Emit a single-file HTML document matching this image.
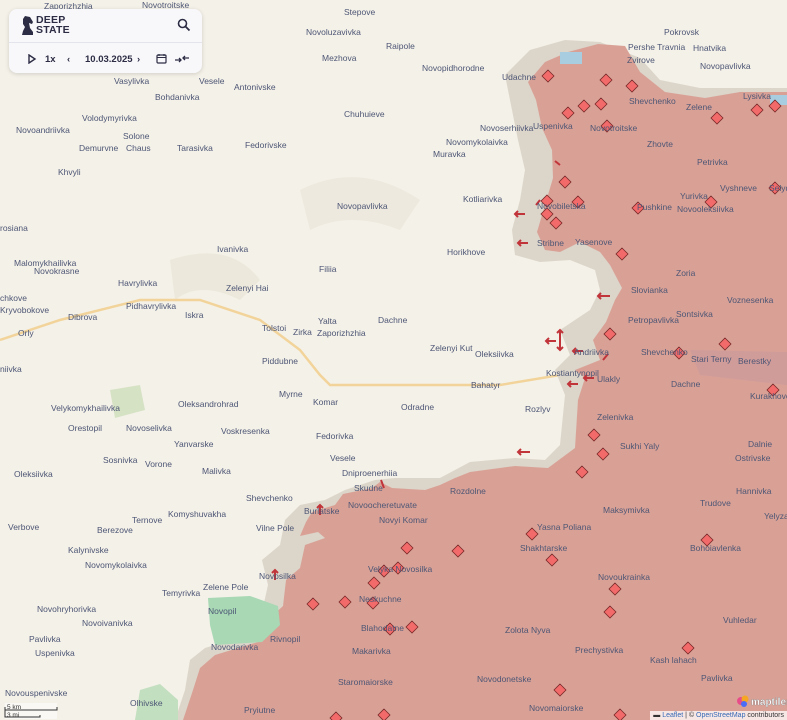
<!DOCTYPE html>
<html><head><meta charset="utf-8"><style>
html,body{margin:0;padding:0;width:787px;height:720px;overflow:hidden;background:#f4f1e8;font-family:"Liberation Sans",sans-serif}
svg{position:absolute;left:0;top:0}
.l{font-size:8.5px;fill:#4d5675}
.panel{position:absolute;left:9px;top:9px;width:193px;height:64px;background:#f8f8fb;border-radius:8px;box-shadow:0 1px 4px rgba(0,0,0,.15)}
.panel .top{height:33px;border-bottom:1px solid #e4e5ec;position:relative}
.logo{position:absolute;left:27px;top:6px;font-weight:bold;font-size:10.5px;line-height:10px;color:#2c2c44;letter-spacing:.2px}
.ctl{position:absolute;top:45px;font-size:9.5px;font-weight:bold;color:#2c2c44}
.attr{position:absolute;right:0;bottom:0;background:rgba(255,255,255,.75);font-size:7px;padding:1px 3px;color:#333}
.attr a{color:#3568b5;text-decoration:none}
</style></head><body>
<svg width="787" height="720" viewBox="0 0 787 720">
<path d="M300 190 Q360 160 420 200 L400 230 Q350 210 310 230 Z" fill="#e9e4d8" opacity=".6"/>
<path d="M170 260 Q230 240 260 280 L240 300 Q200 280 175 300Z" fill="#e6e2d4" opacity=".6"/>
<path d="M0 340 L60 320 L140 300 L200 300 L260 320 L300 350 L320 375 L330 385 L500 385 L560 375 L620 378 L700 382 L787 385" stroke="#f2d49a" stroke-width="2.5" fill="none"/>
<path d="M505 75 L530 50 L565 40 L600 42 L640 58 L660 80 L700 88 L787 88 L787 720 L175 720 L185 690 L190 660 L205 648 L248 635 L262 612 L268 585 L262 560 L280 545 L285 520 L300 505 L325 500 L345 490 L375 480 L395 478 L440 478 L470 462 L515 458 L545 460 L560 445 L565 395 L555 370 L570 355 L560 330 L590 310 L600 290 L595 270 L570 260 L540 262 L515 255 L512 230 L520 200 L525 170 L518 140 L512 110 Z" fill="#dcd5ca"/>
<path d="M528 82 L545 62 L568 52 L598 44 L625 46 L640 72 L665 92 L705 98 L740 92 L787 92 L787 720 L183 720 L193 690 L200 668 L215 655 L258 642 L270 618 L283 606 L286 580 L300 568 L305 545 L325 538 L318 532 L300 536 L306 522 L312 512 L335 505 L343 494 L372 488 L380 482 L392 488 L425 490 L440 485 L455 478 L470 472 L515 466 L548 468 L575 448 L578 400 L585 378 L575 370 L600 360 L593 340 L606 322 L615 300 L622 288 L610 265 L600 252 L580 242 L560 252 L545 250 L537 232 L545 205 L553 178 L552 150 L542 128 L536 100 Z" fill="#d9a196"/>
<path d="M690 350 L787 352 L787 385 L700 375 Z" fill="#c9999c" opacity=".6"/>
<rect x="560" y="52" width="22" height="12" fill="#a8cce0"/>
<rect x="770" y="95" width="17" height="10" fill="#a8cce0"/>
<path d="M208 598 L250 596 L278 606 L280 625 L262 642 L215 645 L210 625 Z" fill="#a8d8b4"/>
<path d="M110 390 L140 385 L145 410 L115 418Z" fill="#d6e2c4"/>
<path d="M140 690 L160 684 L178 700 L178 720 L135 720Z" fill="#c2dfbf"/>
<g fill="#f26a6a" stroke="#7a2a2a" stroke-width=".8">
<path d="M548 70l6 6-6 6-6-6z M606 74l6 6-6 6-6-6z M632 80l6 6-6 6-6-6z M568 107l6 6-6 6-6-6z M584 100l6 6-6 6-6-6z M601 98l6 6-6 6-6-6z M607 120l6 6-6 6-6-6z M717 112l6 6-6 6-6-6z M757 104l6 6-6 6-6-6z M775 100l6 6-6 6-6-6z M565 176l6 6-6 6-6-6z M547 195l6 6-6 6-6-6z M578 196l6 6-6 6-6-6z M547 208l6 6-6 6-6-6z M556 217l6 6-6 6-6-6z M622 248l6 6-6 6-6-6z M638 202l6 6-6 6-6-6z M711 196l6 6-6 6-6-6z M775 182l6 6-6 6-6-6z M610 328l6 6-6 6-6-6z M679 347l6 6-6 6-6-6z M725 338l6 6-6 6-6-6z M773 384l6 6-6 6-6-6z M594 429l6 6-6 6-6-6z M603 448l6 6-6 6-6-6z M582 466l6 6-6 6-6-6z M532 528l6 6-6 6-6-6z M458 545l6 6-6 6-6-6z M407 542l6 6-6 6-6-6z M384 565l6 6-6 6-6-6z M398 562l6 6-6 6-6-6z M374 577l6 6-6 6-6-6z M373 597l6 6-6 6-6-6z M345 596l6 6-6 6-6-6z M313 598l6 6-6 6-6-6z M390 623l6 6-6 6-6-6z M412 621l6 6-6 6-6-6z M552 554l6 6-6 6-6-6z M615 583l6 6-6 6-6-6z M610 606l6 6-6 6-6-6z M707 534l6 6-6 6-6-6z M688 642l6 6-6 6-6-6z M560 684l6 6-6 6-6-6z M620 709l6 6-6 6-6-6z M384 709l6 6-6 6-6-6z M336 712l6 6-6 6-6-6z"/>
</g>
<g stroke="#c0343a" stroke-width="2" fill="none">
<path d="M525 214h-10m3-3l-3 3 3 3 M528 243h-10m3-3l-3 3 3 3 M610 296h-12m3-3l-3 3 3 3 M560 330v20 M557 333l3-3 3 3 M557 347l3 3 3-3 M556 341h-10m3-3l-3 3 3 3 M583 351h-10m3-3l-3 3 3 3 M608 354l-5 6 M594 378h-10m3-3l-3 3 3 3 M578 384h-10m3-3l-3 3 3 3 M530 452h-12m3-3l-3 3 3 3 M384 488l-3-8 M320 515v-10m-3 3l3-3 3 3 M275 580v-10m-3 3l3-3 3 3 M560 165l-5-4 M540 200l-4 5"/>
</g>
<g class="l">
<text x="44" y="9">Zaporizhzhia</text><text x="142" y="8">Novotroitske</text><text x="344" y="15">Stepove</text>
<text x="306" y="35">Novoluzavivka</text><text x="386" y="49">Raipole</text><text x="322" y="61">Mezhova</text>
<text x="422" y="71">Novopidhorodne</text><text x="502" y="80">Udachne</text><text x="664" y="35">Pokrovsk</text>
<text x="628" y="50">Pershe Travnia</text><text x="693" y="51">Hnatvika</text><text x="627" y="63">Zvirove</text>
<text x="700" y="69">Novopavlivka</text><text x="114" y="84">Vasylivka</text><text x="199" y="84">Vesele</text>
<text x="234" y="90">Antonivske</text><text x="155" y="100">Bohdanivka</text><text x="743" y="99">Lysivka</text>
<text x="629" y="104">Shevchenko</text><text x="686" y="110">Zelene</text><text x="82" y="121">Volodymyrivka</text>
<text x="344" y="117">Chuhuieve</text><text x="16" y="133">Novoandriivka</text><text x="123" y="139">Solone</text>
<text x="480" y="131">Novoserhiivka</text><text x="533" y="129">Uspenivka</text><text x="590" y="131">Novotroitske</text>
<text x="79" y="151">Demurvne</text><text x="126" y="151">Chaus</text><text x="177" y="151">Tarasivka</text>
<text x="245" y="148">Fedorivske</text><text x="446" y="145">Novomykolaivka</text><text x="647" y="147">Zhovte</text>
<text x="433" y="157">Muravka</text><text x="697" y="165">Petrivka</text><text x="58" y="175">Khvyli</text>
<text x="720" y="191">Vyshneve</text><text x="769" y="191">Selyd</text><text x="680" y="199">Yurivka</text>
<text x="463" y="202">Kotliarivka</text><text x="537" y="209">Novobiletska</text><text x="637" y="210">Pushkine</text>
<text x="677" y="212">Novooleksiivka</text><text x="337" y="209">Novopavlivka</text><text x="0" y="231">rosiana</text>
<text x="217" y="252">Ivanivka</text><text x="537" y="246">Stribne</text><text x="575" y="245">Yasenove</text>
<text x="447" y="255">Horikhove</text><text x="14" y="266">Malomykhailivka</text><text x="319" y="272">Filiia</text>
<text x="676" y="276">Zoria</text><text x="34" y="274">Novokrasne</text><text x="226" y="291">Zelenyi Hai</text>
<text x="118" y="286">Havrylivka</text><text x="631" y="293">Slovianka</text><text x="727" y="303">Voznesenka</text>
<text x="0" y="301">chkove</text><text x="0" y="313">Kryvobokove</text><text x="126" y="309">Pidhavrylivka</text>
<text x="68" y="320">Dibrova</text><text x="185" y="318">Iskra</text><text x="676" y="317">Sontsivka</text>
<text x="318" y="324">Yalta</text><text x="378" y="323">Dachne</text><text x="628" y="323">Petropavlivka</text>
<text x="262" y="331">Tolstoi</text><text x="293" y="335">Zirka</text><text x="317" y="336">Zaporizhzhia</text>
<text x="18" y="336">Orly</text><text x="430" y="351">Zelenyi Kut</text><text x="475" y="357">Oleksiivka</text>
<text x="641" y="355">Shevchenko</text><text x="574" y="355">Andriivka</text><text x="691" y="362">Stari Terny</text>
<text x="738" y="364">Berestky</text><text x="262" y="364">Piddubne</text><text x="0" y="372">niivka</text>
<text x="546" y="376">Kostiantynopil</text><text x="597" y="382">Ulakly</text><text x="471" y="388">Bahatyr</text>
<text x="671" y="387">Dachne</text><text x="279" y="397">Myrne</text><text x="750" y="399">Kurakhove</text>
<text x="51" y="411">Velykomykhailivka</text><text x="178" y="407">Oleksandrohrad</text><text x="313" y="405">Komar</text>
<text x="401" y="410">Odradne</text><text x="525" y="412">Rozlyv</text><text x="68" y="431">Orestopil</text>
<text x="126" y="431">Novoselivka</text><text x="221" y="434">Voskresenka</text><text x="597" y="420">Zelenivka</text>
<text x="316" y="439">Fedorivka</text><text x="174" y="447">Yanvarske</text><text x="620" y="449">Sukhi Yaly</text>
<text x="748" y="447">Dalnie</text><text x="103" y="463">Sosnivka</text><text x="145" y="467">Vorone</text>
<text x="330" y="461">Vesele</text><text x="735" y="461">Ostrivske</text><text x="14" y="477">Oleksiivka</text>
<text x="202" y="474">Malivka</text><text x="342" y="476">Dniproenerhiia</text><text x="354" y="491">Skudne</text>
<text x="450" y="494">Rozdolne</text><text x="736" y="494">Hannivka</text><text x="246" y="501">Shevchenko</text>
<text x="700" y="506">Trudove</text><text x="132" y="523">Ternove</text><text x="348" y="508">Novoocheretuvate</text>
<text x="603" y="513">Maksymivka</text><text x="8" y="530">Verbove</text><text x="168" y="517">Komyshuvakha</text>
<text x="97" y="533">Berezove</text><text x="304" y="514">Burlatske</text><text x="256" y="531">Vilne Pole</text>
<text x="379" y="523">Novyi Komar</text><text x="537" y="530">Yasna Poliana</text><text x="764" y="519">Yelyza</text>
<text x="68" y="553">Kalynivske</text><text x="520" y="551">Shakhtarske</text><text x="690" y="551">Bohoiavlenka</text>
<text x="368" y="572">Velyka Novosilka</text><text x="85" y="568">Novomykolaivka</text><text x="259" y="579">Novosilka</text>
<text x="598" y="580">Novoukrainka</text><text x="203" y="590">Zelene Pole</text><text x="162" y="596">Temyrivka</text>
<text x="359" y="602">Neskuchne</text><text x="208" y="614">Novopil</text><text x="37" y="612">Novohryhorivka</text>
<text x="82" y="626">Novoivanivka</text><text x="361" y="631">Blahodatne</text><text x="505" y="633">Zolota Nyva</text>
<text x="723" y="623">Vuhledar</text><text x="270" y="642">Rivnopil</text><text x="29" y="642">Pavlivka</text>
<text x="211" y="650">Novodarivka</text><text x="352" y="654">Makarivka</text><text x="575" y="653">Prechystivka</text>
<text x="35" y="656">Uspenivka</text><text x="650" y="663">Kash lahach</text><text x="701" y="681">Pavlivka</text>
<text x="338" y="685">Staromaiorske</text><text x="477" y="682">Novodonetske</text><text x="5" y="696">Novouspenivske</text>
<text x="130" y="706">Olhivske</text><text x="244" y="713">Pryiutne</text><text x="529" y="711">Novomaiorske</text>
</g>
<rect x="5" y="703" width="52" height="16" fill="rgba(255,255,255,.5)"/>
<path d="M5 707v3h52v-3M5 710v7h35v-2" stroke="#333" fill="none" stroke-width="1"/>
<text x="7" y="709" font-size="6.5" fill="#333">5 km</text><text x="7" y="717" font-size="6.5" fill="#333">3 mi</text>
<circle cx="741" cy="701" r="4" fill="#e84d8a"/><circle cx="745" cy="699" r="3.5" fill="#f5a623"/><circle cx="744" cy="704" r="3" fill="#4a6cf7"/>
<text x="751" y="705" font-size="10" fill="#fff" font-weight="bold" stroke="#777" stroke-width=".3">maptiler</text>
</svg>
<div class="attr">▬ <a>Leaflet</a> | © <a>OpenStreetMap</a> contributors</div>
<div class="panel">
 <div class="top">
  <svg width="14" height="20" style="left:12px;top:6px" viewBox="0 0 14 20"><path d="M4 1 L9 2 L12 7 L11 9 L8 8 L9 13 L12 17 L12 20 L1 20 L2 16 L4 12 L2 9 L2 4Z" fill="#2c2c44"/></svg>
  <div class="logo">DEEP<br>STATE</div>
  <svg width="14" height="14" style="left:168px;top:9px" viewBox="0 0 14 14"><circle cx="5.5" cy="5.5" r="4" stroke="#2c2c44" stroke-width="1.6" fill="none"/><path d="M8.5 8.5 L12.5 12.5" stroke="#2c2c44" stroke-width="1.8"/></svg>
 </div>
 <svg width="10" height="10" style="left:18px;top:45px" viewBox="0 0 10 10"><path d="M2 1 L8 5 L2 9Z" fill="none" stroke="#2c2c44" stroke-width="1.4"/></svg>
 <div class="ctl" style="left:36px">1x</div>
 <div class="ctl" style="left:58px">‹</div>
 <div class="ctl" style="left:76px">10.03.2025</div>
 <div class="ctl" style="left:128px">›</div>
 <svg width="11" height="11" style="left:147px;top:44px" viewBox="0 0 11 11"><rect x="1" y="2" width="9" height="8" rx="1" fill="none" stroke="#2c2c44" stroke-width="1.2"/><path d="M1 4.5h9M3 1v2M8 1v2" stroke="#2c2c44"/></svg>
 <svg width="14" height="10" style="left:166px;top:45px" viewBox="0 0 14 10"><path d="M0 6h6M4 4l2 2-2 2M14 4h-6M10 2l-2 2 2 2" stroke="#2c2c44" stroke-width="1.3" fill="none"/></svg>
</div>
</body></html>
